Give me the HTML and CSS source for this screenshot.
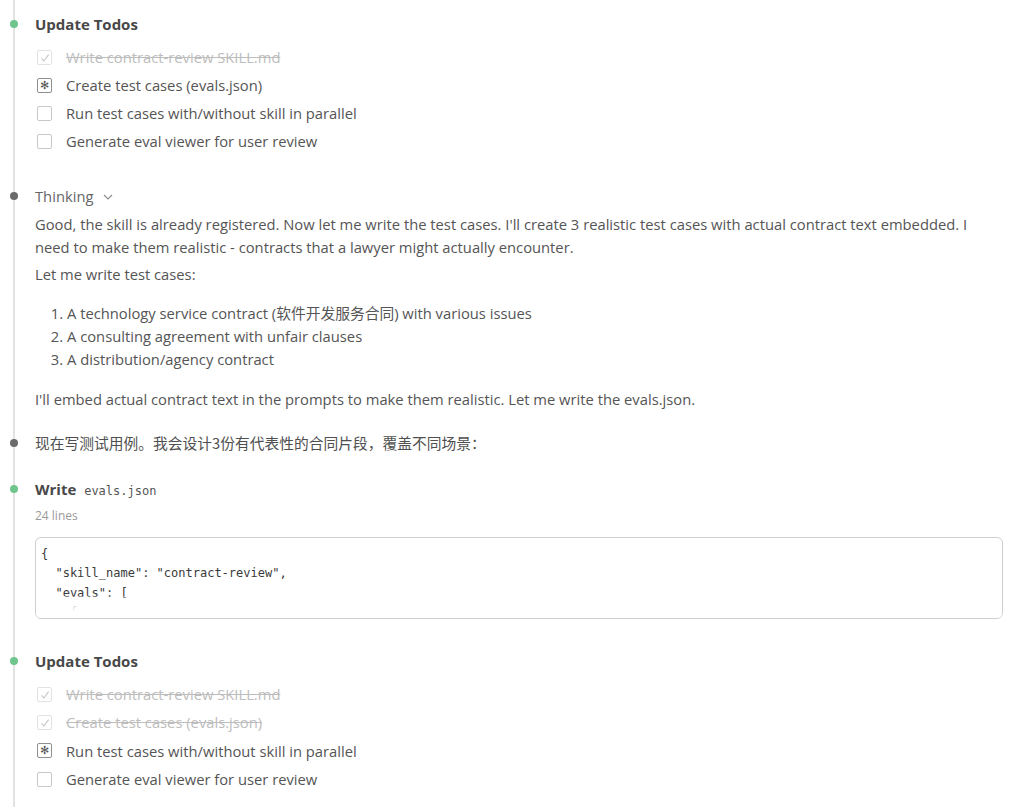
FILE: index.html
```html
<!DOCTYPE html>
<html lang="en">
<head>
<meta charset="utf-8">
<title>Transcript</title>
<link rel="stylesheet" href="styles.css">
</head>
<body>
<div class="timeline">

  <section class="entry entry-todos entry-first">
    <span class="dot dot-green"></span>
    <h2 class="entry-title">Update Todos</h2>
    <ul class="todos">
      <li class="todo done"><span class="box"><svg viewBox="0 0 14 14" width="14" height="14"><path d="M3.5 7.4 L5.9 10 L10.6 3.6" fill="none" stroke="#c4c4c4" stroke-width="1.1"/></svg></span><span class="todo-text">Write contract-review SKILL.md</span></li>
      <li class="todo active"><span class="box"><span class="star">✻</span></span><span class="todo-text">Create test cases (evals.json)</span></li>
      <li class="todo"><span class="box"></span><span class="todo-text">Run test cases with/without skill in parallel</span></li>
      <li class="todo"><span class="box"></span><span class="todo-text">Generate eval viewer for user review</span></li>
    </ul>
  </section>

  <section class="entry entry-thinking">
    <span class="dot dot-grey"></span>
    <div class="thinking-head">Thinking <svg class="chev" viewBox="0 0 10 6" width="10" height="6"><path d="M1 1 L5 5 L9 1" fill="none" stroke="#8a8a8a" stroke-width="1.1"/></svg></div>
    <p class="para first">Good, the skill is already registered. Now let me write the test cases. I'll create 3 realistic test cases with actual contract text embedded. I need to make them realistic - contracts that a lawyer might actually encounter.</p>
    <p class="para">Let me write test cases:</p>
    <ol class="numbered">
      <li>A technology service contract (软件开发服务合同) with various issues</li>
      <li>A consulting agreement with unfair clauses</li>
      <li>A distribution/agency contract</li>
    </ol>
    <p class="para">I'll embed actual contract text in the prompts to make them realistic. Let me write the evals.json.</p>
  </section>

  <section class="entry entry-msg">
    <span class="dot dot-grey"></span>
    <p class="para zh">现在写测试用例。我会设计3份有代表性的合同片段，覆盖不同场景：</p>
  </section>

  <section class="entry entry-write">
    <span class="dot dot-green"></span>
    <h2 class="entry-title">Write <code class="file">evals.json</code></h2>
    <div class="meta">24 lines</div>
    <div class="codebox">
<pre class="code">{
  "skill_name": "contract-review",
  "evals": [
    {</pre>
    </div>
  </section>

  <section class="entry entry-todos entry-last">
    <span class="dot dot-green"></span>
    <h2 class="entry-title">Update Todos</h2>
    <ul class="todos">
      <li class="todo done"><span class="box"><svg viewBox="0 0 14 14" width="14" height="14"><path d="M3.5 7.4 L5.9 10 L10.6 3.6" fill="none" stroke="#c4c4c4" stroke-width="1.1"/></svg></span><span class="todo-text">Write contract-review SKILL.md</span></li>
      <li class="todo done"><span class="box"><svg viewBox="0 0 14 14" width="14" height="14"><path d="M3.5 7.4 L5.9 10 L10.6 3.6" fill="none" stroke="#c4c4c4" stroke-width="1.1"/></svg></span><span class="todo-text">Create test cases (evals.json)</span></li>
      <li class="todo active"><span class="box"><span class="star">✻</span></span><span class="todo-text">Run test cases with/without skill in parallel</span></li>
      <li class="todo"><span class="box"></span><span class="todo-text">Generate eval viewer for user review</span></li>
    </ul>
  </section>

</div>
</body>
</html>
```
FILE: styles.css
```css
html, body {
  margin: 0;
  padding: 0;
  background: #ffffff;
}
body {
  font-family: "Open Sans", "Noto Sans CJK SC", sans-serif;
  font-size: 14.75px;
  color: #555555;
  overflow: hidden;
  height: 807px;
}
.timeline {
  position: relative;
  padding: 14px 7px 0 35px;
  min-height: 807px;
  box-sizing: border-box;
}
.timeline::before {
  content: "";
  position: absolute;
  left: 13px;
  top: 0;
  bottom: 0;
  width: 2px;
  background: #e3e3e3;
}
.entry {
  position: relative;
  margin-bottom: 22px;
}
.dot {
  position: absolute;
  left: -25px;
  width: 8px;
  height: 8px;
  border-radius: 50%;
}
.dot-green { background: #6fc58c; }
.dot-grey { background: #6b6b6b; }

.entry-title {
  margin: 0;
  font-size: 15px;
  line-height: 20px;
  font-weight: 700;
  color: #484848;
}
.entry .dot { top: 6px; }
.entry-thinking .dot { top: 7.5px; }
.entry-msg .dot { top: 7.5px; }

.todos {
  list-style: none;
  margin: 9px 0 0 2px;
  padding: 0;
}
.todo {
  display: flex;
  align-items: center;
  height: 28px;
  line-height: 28px;
}
.entry-last .todo { height: 28.4px; }
.box {
  width: 13px;
  height: 13px;
  border: 1px solid #c9c9c9;
  border-radius: 2px;
  display: inline-flex;
  align-items: center;
  justify-content: center;
  margin-right: 14px;
  box-sizing: content-box;
  position: relative;
}
.box svg { position: absolute; left: 0; top: 0; }
.todo.done .box { border-color: #e2e2e2; }
.todo.done .todo-text {
  color: #bdbdbd;
  text-decoration: line-through;
  text-decoration-color: #bdbdbd;
}
.todo.active .box { border-color: #8f8f8f; }
.star {
  font-family: "DejaVu Sans", sans-serif;
  font-size: 11px;
  line-height: 11px;
  color: #555;
}
.todo-text { color: #555555; }
.entry-todos { padding-bottom: 7.5px; }

.thinking-head {
  line-height: 23px;
  color: #666;
  display: flex;
  align-items: center;
}
.chev { margin-left: 10px; margin-top: 1px; }
.para {
  margin: 4px 0 0;
  line-height: 23px;
  padding-right: 14px;
}
.para.first { margin-top: 5px; }
.numbered {
  margin: 16px 0 17px;
  padding-left: 32px;
  line-height: 23.3px;
}
.entry-thinking { margin-bottom: 20px; }
.entry-msg .para { margin-top: 0; }
.entry-msg { padding-bottom: 2.5px; }
.zh { font-family: "Noto Sans CJK SC", sans-serif; font-size: 14.75px; color: #4f4f4f; }

.file {
  font-family: "DejaVu Sans Mono", monospace;
  font-size: 12px;
  font-weight: 400;
  color: #555;
  margin-left: 4px;
}
.meta {
  margin-top: 7px;
  font-size: 12px;
  line-height: 16px;
  color: #9a9a9a;
}
.codebox {
  position: relative;
  margin-top: 13px;
  height: 80px;
  border: 1px solid #cfcfcf;
  border-radius: 6px;
  overflow: hidden;
}
.codebox::after {
  content: "";
  position: absolute;
  left: 0;
  right: 0;
  bottom: 0;
  height: 22px;
  background: linear-gradient(to bottom, rgba(255,255,255,0.3), #ffffff 70%);
}
.code {
  margin: 0;
  padding: 7px 5px 4px;
  font-family: "DejaVu Sans Mono", monospace;
  font-size: 12px;
  line-height: 19.5px;
  color: #3a3a3a;
}
.entry-write { padding-bottom: 10px; }
```
